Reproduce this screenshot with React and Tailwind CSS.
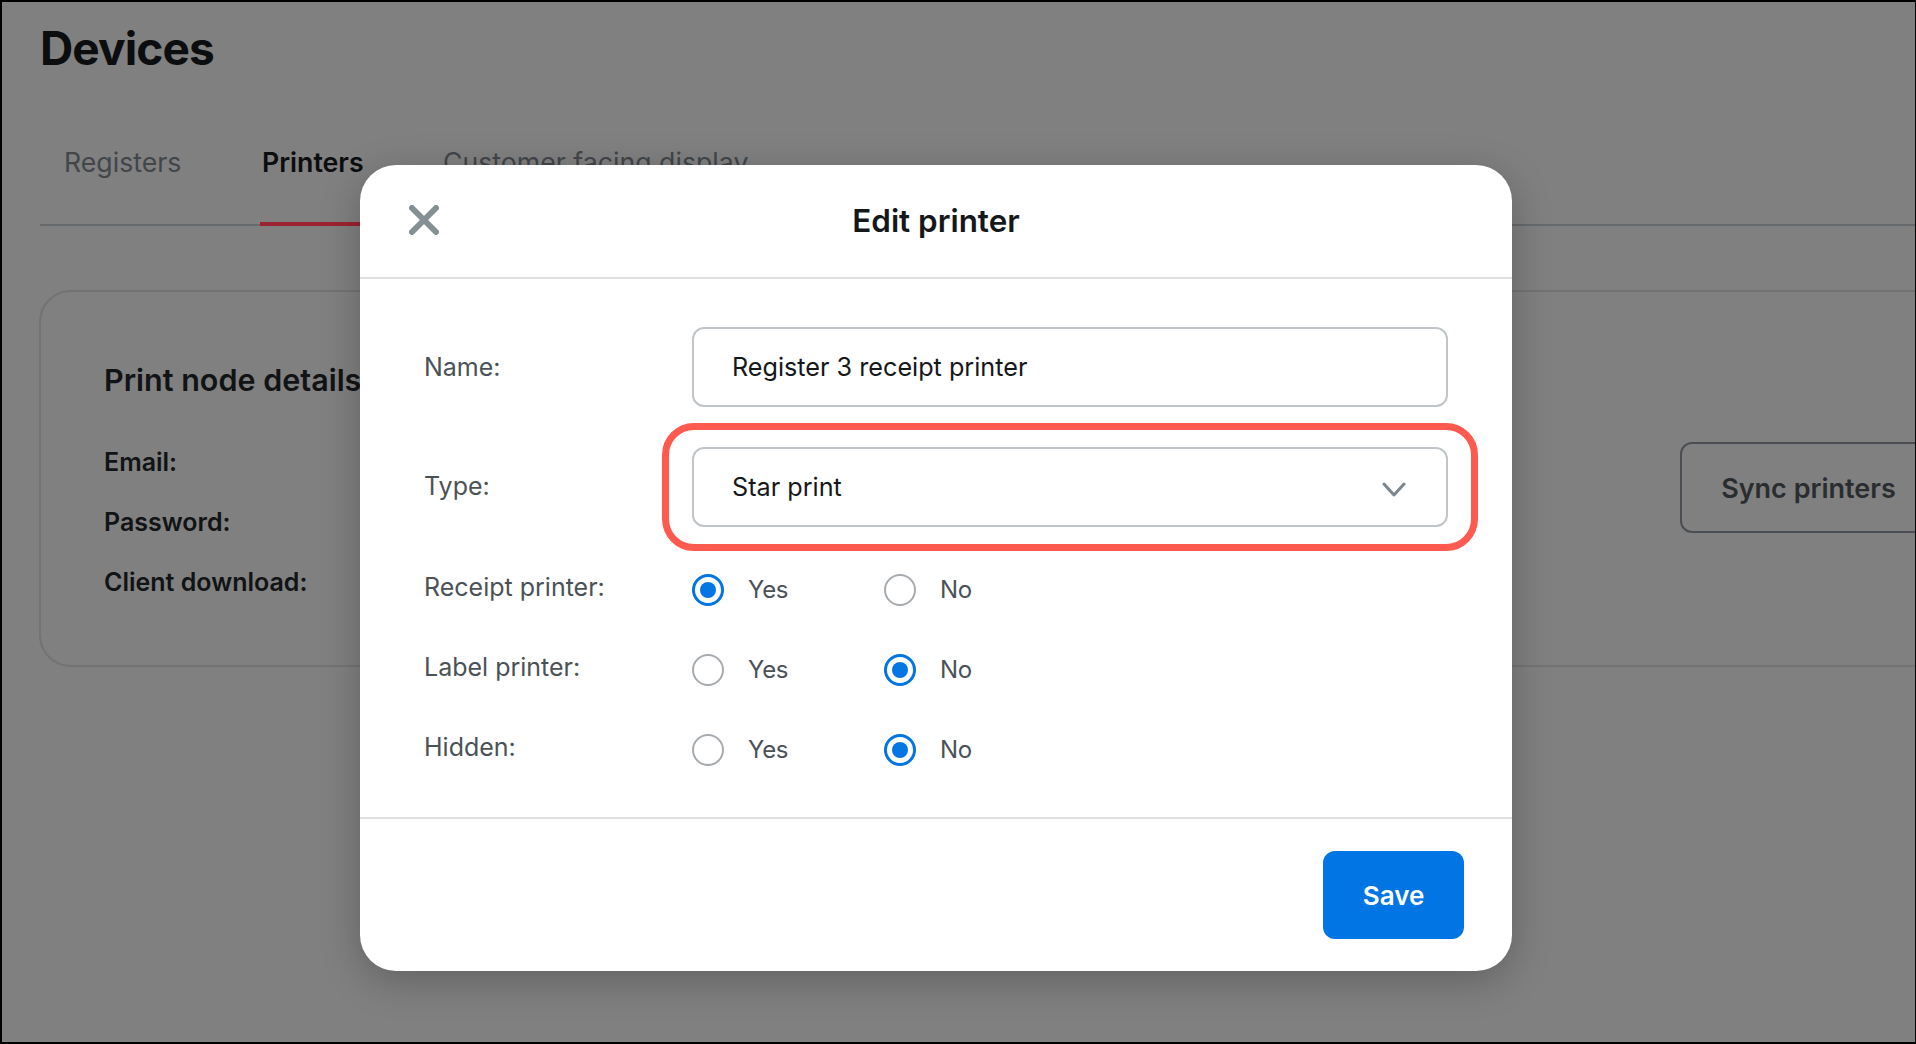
import React from "react";

const font = { fontFamily: '"Inter", "Liberation Sans", sans-serif' };

function Radio({ checked, label }) {
  return (
    <div className="flex w-[192px] items-center gap-[24px]">
      <span
        className={
          checked
            ? "flex h-[32px] w-[32px] items-center justify-center rounded-full border-[3px] border-[#0275e4] bg-white"
            : "flex h-[32px] w-[32px] items-center justify-center rounded-full border-2 border-[#a6abb0] bg-white"
        }
      >
        {checked && <span className="h-[16px] w-[16px] rounded-full bg-[#0275e4]" />}
      </span>
      <span className="text-[24px] leading-[32px] tracking-[-0.3px] text-[#4a5257]">{label}</span>
    </div>
  );
}

function RadioRow({ label, value }) {
  return (
    <div className="grid grid-cols-[268px_1fr] items-center">
      <span className="pb-[5px] text-[25px] leading-[27px] text-[#4a5257]">{label}</span>
      <div className="flex">
        <Radio checked={value} label="Yes" />
        <Radio checked={!value} label="No" />
      </div>
    </div>
  );
}

export default function App() {
  return (
    <div
      style={font}
      className="relative h-[1044px] w-[1916px] overflow-hidden border-y-2 border-l-2 border-r border-black bg-[#808080]"
    >
      <div className="pl-[38px]">
        <h1 className="flex h-[92px] items-center text-[46px] font-bold leading-none tracking-[-0.9px] text-[#0c0d0e]">
          Devices
        </h1>
        <div className="mt-[30px] flex border-b-2 border-[#666a6c] pl-[24px]">
          <div className="-mb-[2px] h-[102px] w-[196px] text-[26.7px] leading-[76px] text-[#42464a]">Registers</div>
          <div className="-mb-[2px] h-[102px] w-[183px] border-b-4 border-[#9b2331] pl-[2px] text-[26.7px] font-semibold leading-[76px] text-[#0c0d0e]">
            Printers
          </div>
          <div className="text-[26.7px] leading-[76px] text-[#42464a]">Customer facing display</div>
        </div>
        <div className="-ml-[1px] mt-[64px] flex h-[377px] w-[2000px] rounded-[32px] border-2 border-[#737373] pl-[63px]">
          <div className="w-[1576px] pt-[70px]">
            <h2 className="text-[30.5px] font-semibold leading-[36px] text-[#111315]">Print node details</h2>
            <div className="mt-[49px] flex flex-col gap-[30px] text-[25px] font-semibold leading-[30px] text-[#111315]">
              <div>Email:</div>
              <div>Password:</div>
              <div>Client download:</div>
            </div>
          </div>
          <div className="mt-[150px] flex h-[91px] w-[257px] items-center justify-center self-start rounded-[12px] border-2 border-[#4a4e52] pt-[3px] text-[27px] font-semibold text-[#2a2d30]">
            Sync printers
          </div>
        </div>
      </div>

      <div className="absolute left-[358px] top-[163px] flex h-[806px] w-[1152px] flex-col rounded-[36px] bg-white shadow-[0_10px_40px_rgba(0,0,0,0.24)]">
        <div className="grid h-[114px] grid-cols-[1fr_auto_1fr] items-center border-b-2 border-[#e0e0e0] px-[49px]">
          <svg className="mb-[2px]" width="30" height="30" viewBox="0 0 30 30" fill="none" stroke="#859095" strokeWidth="6" strokeLinecap="round">
            <path d="M3 3 L27 27 M27 3 L3 27" />
          </svg>
          <h3 className="pt-[2px] text-[31.4px] font-semibold leading-none text-[#15181a]">Edit printer</h3>
          <span />
        </div>

        <div className="flex h-[538px] flex-col pl-[64px] pr-[64px] pt-[48px]">
          <div className="grid grid-cols-[268px_1fr] items-center">
            <span className="pt-[1px] text-[25px] text-[#4a5257]">Name:</span>
            <div className="flex h-[80px] items-center rounded-[12px] border-2 border-[#c0c5ca] pl-[38px] pt-[1px] text-[25.2px] text-[#15181a]">
              Register 3 receipt printer
            </div>
          </div>
          <div className="mt-[40px] grid grid-cols-[268px_1fr] items-center">
            <span className="text-[25px] text-[#4a5257]">Type:</span>
            <div className="relative flex h-[80px] items-center justify-between rounded-[12px] border-2 border-[#c0c5ca] pl-[38px] pr-[40px] pt-[1px] text-[25.2px] text-[#15181a]">
              Star print
              <svg className="mt-[3px]" width="24" height="15" viewBox="0 0 24 15" fill="none" stroke="#7c868d" strokeWidth="3" strokeLinecap="round" strokeLinejoin="round">
                <path d="M2 2 L12 13 L22 2" />
              </svg>
              <div className="absolute -inset-x-[32px] -inset-y-[26px] rounded-[32px] border-[7px] border-[#ff5a50]" />
            </div>
          </div>
          <div className="mt-[47px] flex flex-col gap-[48px]">
            <RadioRow label="Receipt printer:" value={true} />
            <RadioRow label="Label printer:" value={false} />
            <RadioRow label="Hidden:" value={false} />
          </div>
        </div>

        <div className="flex flex-1 items-start justify-end border-t-2 border-[#e0e0e0] pr-[48px] pt-[32px]">
          <div className="flex h-[88px] w-[141px] items-center justify-center rounded-[12px] bg-[#0275e4] text-[26px] font-semibold text-white">
            Save
          </div>
        </div>
      </div>
    </div>
  );
}
